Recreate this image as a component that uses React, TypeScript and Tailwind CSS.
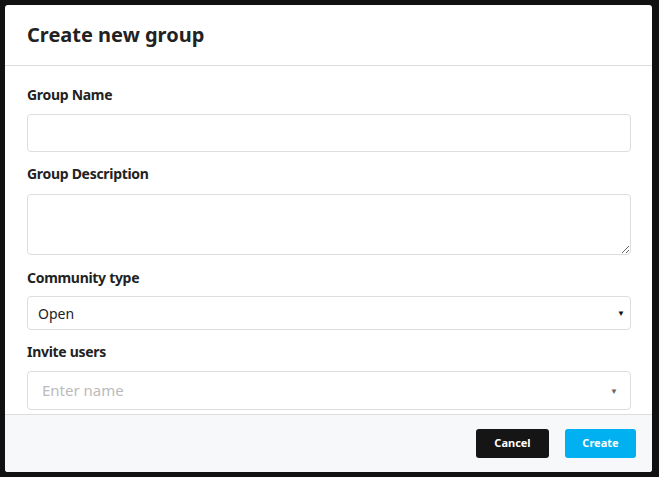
export default function App() {
  const label = 'text-[14px] font-bold text-[#222] leading-none [font-family:"DejaVu_Serif",serif] tracking-[-0.3px]'
  return (
    <div className="w-[659px] h-[477px] bg-[#111] pt-[5px] pl-[5px] [font-family:'Liberation_Sans',Arial,sans-serif]">
      <div className="w-[647px] h-[467px] bg-white rounded-[3px] flex flex-col overflow-hidden">
        <div className="h-[61px] border-b border-[#ddd] flex items-center px-[22px]">
          <h1 className="text-[20px] font-bold text-[#222] mt-[-1px]">Create new group</h1>
        </div>
        <div className="flex-1 px-[22px] pt-[22px]">
          <div className={label}>Group Name</div>
          <input className="mt-[12px] w-[604px] h-[38px] border border-[#ddd] rounded-[4px] outline-none" />
          <div className={label + ' mt-[15px]'}>Group Description</div>
          <textarea className="mt-[13px] w-[604px] h-[61px] border border-[#ddd] rounded-[4px] outline-none block resize-y" />
          <div className={label + ' mt-[16px]'}>Community type</div>
          <div className="mt-[11px] w-[604px] h-[34px] border border-[#ddd] rounded-[4px] flex items-center justify-between pl-[10px] pr-[5px]">
            <span className="text-[14px] text-[#222] [font-family:'DejaVu_Serif',serif]">Open</span>
            <span className="text-[8px] text-[#111]">▼</span>
          </div>
          <div className={label + ' mt-[15px]'}>Invite users</div>
          <div className="mt-[12px] w-[604px] h-[39px] border border-[#ddd] rounded-[4px] flex items-center justify-between pl-[14px] pr-[12px]">
            <span className="text-[15px] text-[#bbb] [font-family:'DejaVu_Serif',serif]">Enter name</span>
            <span className="text-[8px] text-[#666]">▼</span>
          </div>
        </div>
        <div className="h-[58px] bg-[#f7f8fa] border-t border-[#ddd] flex items-center justify-end gap-[16px] pr-[16px]">
          <button className="w-[73px] h-[29px] bg-[#151515] text-white text-[11px] font-bold rounded-[3px]">Cancel</button>
          <button className="w-[71px] h-[29px] bg-[#00b0f0] text-white text-[11px] font-bold rounded-[3px]">Create</button>
        </div>
      </div>
    </div>
  )
}
